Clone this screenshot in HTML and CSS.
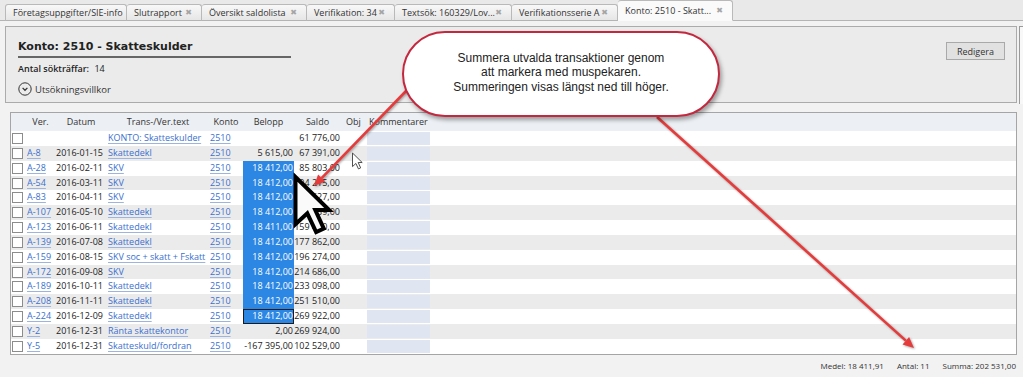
FILE: index.html
```html
<!DOCTYPE html>
<html lang="sv">
<head>
    <meta charset="UTF-8">
    <title>Konto: 2510 - Skatteskulder</title>
    <link rel="stylesheet" href="styles.css">
</head>
<body>
    <div class="tabbar">
        <div class="tab w1">Företagsuppgifter/SIE-info</div>
        <div class="tab w2">Slutrapport <span class="close">✖</span></div>
        <div class="tab w3">Översikt saldolista <span class="close">✖</span></div>
        <div class="tab w4">Verifikation: 34 <span class="close">✖</span></div>
        <div class="tab w5">Textsök: 160329/Lov... <span class="close">✖</span></div>
        <div class="tab w6">Verifikationsserie A <span class="close">✖</span></div>
        <div class="tab w7 active">Konto: 2510 - Skatt... <span class="close">✖</span></div>
    </div>

    <div class="main">
        <div class="content">
            <!-- Rubrik och sökvillkor -->
            <div class="panel">
                <div class="panel-left">
                    <div class="title">Konto: 2510 - Skatteskulder</div>
                    <div class="hits"><b>Antal sökträffar:</b> 14</div>
                    <div class="filter">
                        <svg width="14" height="14" viewBox="0 0 14 14"><circle cx="7" cy="7" r="6.2" fill="none" stroke="#333" stroke-width="1"/><polyline points="4.6,5.9 7,8.3 9.4,5.9" fill="none" stroke="#333" stroke-width="1.3"/></svg>
                        <span>Utsökningsvillkor</span>
                    </div>
                </div>
                <button class="edit">Redigera</button>
            </div>

            <!-- Transaktioner -->
            <div class="grid">
                <div class="row head">
                    <div></div>
                    <div class="c">Ver.</div>
                    <div class="c">Datum</div>
                    <div class="c">Trans-/Ver.text</div>
                    <div class="c">Konto</div>
                    <div class="c">Belopp</div>
                    <div class="c">Saldo</div>
                    <div class="c">Obj</div>
                    <div class="komm-h">Kommentarer</div>
                </div>
                <div class="row"><div><span class="cb"></span></div><div></div><div></div><div><a>KONTO: Skatteskulder</a></div><div><a>2510</a></div><div class="num"></div><div class="num">61 776,00</div><div></div><div><span class="komm"></span></div></div>
                <div class="row alt"><div><span class="cb"></span></div><div><a>A-8</a></div><div>2016-01-15</div><div><a>Skattedekl</a></div><div><a>2510</a></div><div class="num">5 615,00</div><div class="num">67 391,00</div><div></div><div><span class="komm"></span></div></div>
                <div class="row"><div><span class="cb"></span></div><div><a>A-28</a></div><div>2016-02-11</div><div><a>SKV</a></div><div><a>2510</a></div><div class="num sel">18 412,00</div><div class="num">85 803,00</div><div></div><div><span class="komm"></span></div></div>
                <div class="row alt"><div><span class="cb"></span></div><div><a>A-54</a></div><div>2016-03-11</div><div><a>SKV</a></div><div><a>2510</a></div><div class="num sel">18 412,00</div><div class="num">104 215,00</div><div></div><div><span class="komm"></span></div></div>
                <div class="row"><div><span class="cb"></span></div><div><a>A-83</a></div><div>2016-04-11</div><div><a>SKV</a></div><div><a>2510</a></div><div class="num sel">18 412,00</div><div class="num">122 627,00</div><div></div><div><span class="komm"></span></div></div>
                <div class="row alt"><div><span class="cb"></span></div><div><a>A-107</a></div><div>2016-05-10</div><div><a>Skattedekl</a></div><div><a>2510</a></div><div class="num sel">18 412,00</div><div class="num">141 039,00</div><div></div><div><span class="komm"></span></div></div>
                <div class="row"><div><span class="cb"></span></div><div><a>A-123</a></div><div>2016-06-11</div><div><a>Skattedekl</a></div><div><a>2510</a></div><div class="num sel">18 411,00</div><div class="num">159 450,00</div><div></div><div><span class="komm"></span></div></div>
                <div class="row alt"><div><span class="cb"></span></div><div><a>A-139</a></div><div>2016-07-08</div><div><a>Skattedekl</a></div><div><a>2510</a></div><div class="num sel">18 412,00</div><div class="num">177 862,00</div><div></div><div><span class="komm"></span></div></div>
                <div class="row"><div><span class="cb"></span></div><div><a>A-159</a></div><div>2016-08-15</div><div><a>SKV soc + skatt + Fskatt</a></div><div><a>2510</a></div><div class="num sel">18 412,00</div><div class="num">196 274,00</div><div></div><div><span class="komm"></span></div></div>
                <div class="row alt"><div><span class="cb"></span></div><div><a>A-172</a></div><div>2016-09-08</div><div><a>SKV</a></div><div><a>2510</a></div><div class="num sel">18 412,00</div><div class="num">214 686,00</div><div></div><div><span class="komm"></span></div></div>
                <div class="row"><div><span class="cb"></span></div><div><a>A-189</a></div><div>2016-10-11</div><div><a>Skattedekl</a></div><div><a>2510</a></div><div class="num sel">18 412,00</div><div class="num">233 098,00</div><div></div><div><span class="komm"></span></div></div>
                <div class="row alt"><div><span class="cb"></span></div><div><a>A-208</a></div><div>2016-11-11</div><div><a>Skattedekl</a></div><div><a>2510</a></div><div class="num sel">18 412,00</div><div class="num">251 510,00</div><div></div><div><span class="komm"></span></div></div>
                <div class="row"><div><span class="cb"></span></div><div><a>A-224</a></div><div>2016-12-09</div><div><a>Skattedekl</a></div><div><a>2510</a></div><div class="num sel focus">18 412,00</div><div class="num">269 922,00</div><div></div><div><span class="komm"></span></div></div>
                <div class="row alt"><div><span class="cb"></span></div><div><a>Y-2</a></div><div>2016-12-31</div><div><a>Ränta skattekontor</a></div><div><a>2510</a></div><div class="num">2,00</div><div class="num">269 924,00</div><div></div><div><span class="komm"></span></div></div>
                <div class="row"><div><span class="cb"></span></div><div><a>Y-5</a></div><div>2016-12-31</div><div><a>Skatteskuld/fordran</a></div><div><a>2510</a></div><div class="num">-167 395,00</div><div class="num">102 529,00</div><div></div><div><span class="komm"></span></div></div>
            </div>

            <div class="status">
                <span>Medel: 18 411,91</span>
                <span>Antal: 11</span>
                <span>Summa: 202 531,00</span>
            </div>
        </div>
        <div class="side"></div>
    </div>

    <!-- Pilar -->
    <svg class="overlay" width="1023" height="377" viewBox="0 0 1023 377">
        <g class="arrows">
            <line x1="407" y1="90" x2="321.6" y2="178.1"/>
            <polygon points="314,186 325.2,181.6 318.1,174.6"/>
            <line x1="657" y1="117" x2="905.8" y2="340.6"/>
            <polygon points="914,348 902.5,344.4 909.1,336.9"/>
        </g>
    </svg>

    <div class="callout">
        Summera utvalda transaktioner genom<br>
        att markera med muspekaren.<br>
        Summeringen visas längst ned till höger.
    </div>

    <!-- Muspekare -->
    <svg class="overlay" width="1023" height="377" viewBox="0 0 1023 377">
        <polygon class="cursor-big" transform="translate(295.5 177) scale(2.95)" points="0,0 0,16 4,12.3 7,18.7 9.6,17.5 6.7,11.2 11.4,11.2"/>
        <polygon class="cursor-small" transform="translate(352.5 153) scale(0.85)" points="0,0 0,16 4,12.3 7,18.7 9.6,17.5 6.7,11.2 11.4,11.2"/>
    </svg>
</body>
</html>
```

FILE: styles.css
```css
* {
    box-sizing: border-box;
}
body {
    margin: 0;
    width: 1023px;
    height: 377px;
    overflow: hidden;
    position: relative;
    background-color: #f2f2f2;
    font-family: "Open Sans", sans-serif;
    font-size: 9px;
    color: #222;
}
.tabbar {
    display: flex;
    align-items: flex-end;
    height: 21px;
    padding-left: 5px;
    background-color: #e9e9e9;
    border-bottom: 1px solid #b4b4b4;
}
.tab {
    display: flex;
    align-items: center;
    height: 17px;
    margin-bottom: -1px;
    padding: 0 9px 0 7px;
    border: 1px solid #b9b9b9;
    border-left: none;
    border-bottom: 1px solid #b4b4b4;
    border-radius: 3px 3px 0 0;
    background: linear-gradient(#f8f8f8, #e6e6e6);
    color: #333;
    white-space: nowrap;
}
.tab:first-child {
    border-left: 1px solid #b9b9b9;
}
.tab.active {
    height: 21px;
    background: #fafafa;
    border-bottom-color: #fafafa;
}
.tab .close {
    margin-left: auto;
    font-family: "DejaVu Sans", sans-serif;
    font-size: 8px;
    color: #a5a5a5;
}
.w1 { width: 122px; }
.w2 { width: 75px; }
.w3 { width: 105px; }
.w4 { width: 88px; }
.w5 { width: 117px; }
.w6 { width: 106px; }
.w7 { width: 115px; }

.main {
    display: flex;
    padding-top: 5px;
}
.content {
    width: 1012px;
    margin-left: 5px;
}
.side {
    width: 4px;
    height: 78px;
    margin-left: 2px;
    border-top: 1px solid #9a9a9a;
    border-left: 1px solid #9a9a9a;
    background-color: #f8f8f8;
}
.panel {
    display: flex;
    height: 77px;
    padding: 11px 11px 0 12px;
    border: 1px solid #ababab;
    background-color: #ebebeb;
}
.title {
    width: 273px;
    height: 20px;
    line-height: 18px;
    border-bottom: 2px solid #666;
    font-family: "DejaVu Sans", sans-serif;
    font-weight: bold;
    font-size: 11px;
    color: #222;
}
.hits {
    margin-top: 4px;
    line-height: 14px;
}
.hits b {
    font-weight: 600;
    margin-right: 3px;
}
.filter {
    display: flex;
    align-items: center;
    gap: 3px;
    height: 16px;
    margin-top: 5px;
    font-size: 9.5px;
    color: #333;
}
.edit {
    margin-left: auto;
    margin-top: 4px;
    width: 59px;
    height: 18px;
    padding: 0;
    border: 1px solid #a9a9a9;
    background-color: #e1e1e1;
    font-family: "Open Sans", sans-serif;
    font-size: 9px;
    color: #333;
}
.grid {
    margin: 9px 0 0 5px;
    width: 1007px;
    border: 1px solid #a5a5a5;
    background-color: #fff;
}
.row {
    display: grid;
    grid-template-columns: 15px 29px 52px 102px 34px 51px 47px 25px 64px 1fr;
    height: 14.85px;
    line-height: 14.85px;
    white-space: nowrap;
}
.row > div {
    padding-left: 1px;
}
.row.head {
    height: 18px;
    line-height: 18px;
    background-color: #eceff3;
    color: #333;
}
.row.head .c {
    text-align: center;
    padding: 0;
}
.komm-h {
    padding-left: 3px !important;
}
.row.alt {
    background-color: #ebebeb;
}
.row a {
    color: #3a6fd0;
    text-decoration: underline;
    text-decoration-color: #9db4de;
    text-underline-offset: 2px;
}
.cb {
    display: block;
    width: 11px;
    height: 11px;
    margin-top: 2px;
    border: 1px solid #8c8c8c;
    background-color: #fff;
}
.row .num {
    text-align: right;
    padding: 0 1px 0 0;
}
.row .sel {
    background-color: #2b87e3;
    color: #fff;
}
.row .focus {
    box-shadow: inset 0 0 0 1px #1c1c1c;
}
.komm {
    display: block;
    height: 13px;
    margin-top: 1px;
    background-color: #dfe6f1;
}
.status {
    display: flex;
    justify-content: flex-end;
    gap: 13px;
    height: 22px;
    line-height: 22px;
    padding-right: 1px;
    font-size: 8px;
    color: #333;
}

.overlay {
    position: absolute;
    left: 0;
    top: 0;
    pointer-events: none;
}
.arrows line {
    stroke: #e63b3b;
    stroke-width: 2.6;
}
.arrows polygon {
    fill: #e63b3b;
}
.arrows {
    filter: drop-shadow(1px 1px 1px rgba(0, 0, 0, 0.35));
}
.callout {
    position: absolute;
    left: 402px;
    top: 31px;
    width: 318px;
    height: 86px;
    display: flex;
    align-items: center;
    justify-content: center;
    padding-bottom: 3px;
    border: 2px solid #c4283f;
    border-radius: 43px;
    background-color: #fff;
    box-shadow: 2px 3px 4px rgba(0, 0, 0, 0.35);
    font-family: "Liberation Sans", Arial, sans-serif;
    font-size: 12px;
    line-height: 14.5px;
    text-align: center;
    color: #222;
}
.cursor-big {
    fill: #fafafa;
    stroke: #000;
    stroke-width: 1.35;
    stroke-linejoin: miter;
}
.cursor-small {
    fill: #fff;
    stroke: #444;
    stroke-width: 1.1;
}
```
